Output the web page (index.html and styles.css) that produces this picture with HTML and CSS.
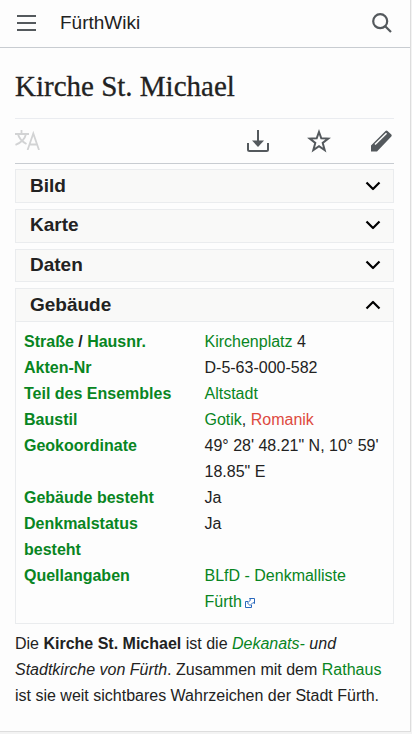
FILE: index.html
```
<!DOCTYPE html>
<html lang="de">
<head>
<meta charset="utf-8">
<title>Kirche St. Michael – FürthWiki</title>
<link rel="stylesheet" href="styles.css">
</head>
<body>
<div class="page">
  <header class="header">
    <svg class="menu" width="20" height="16" viewBox="0 0 20 16"><path d="M0 1h19M0 8h19M0 15h19" fill="none" stroke="#54595d" stroke-width="2"/></svg>
    <span class="brand">FürthWiki</span>
    <svg class="search" width="20" height="20" viewBox="0 0 20 20"><g fill="none" stroke="#54595d" stroke-width="2.2"><circle cx="8.2" cy="8.2" r="7"/><path d="M13 13l6 6"/></g></svg>
  </header>
  <main class="content">
    <h1>Kirche St. Michael</h1>
    <nav class="actions">
      <svg class="lang" width="25" height="20" viewBox="0 0 25 20"><g fill="none" stroke="#d2d3d4" stroke-width="1.8"><path d="M0 4h14M6.500 0v4M3 4c1 5 5 8 8.500 10M11 4C10 9 5 13 .5 14.800"/><path d="M12.600 20L18.300 3.500 24 20M14.500 14.500h7.700"/></g></svg>
      <svg class="download" width="22" height="22" viewBox="0 0 22 22"><path d="M1 13v6.500q0 1.500 1.500 1.500h17q1.500 0 1.500-1.500V13M11 0v12" fill="none" stroke="#54595d" stroke-width="2"/><path d="M5 10.500h12L11 17z" fill="#54595d"/></svg>
      <svg class="star" width="24" height="24" viewBox="0 0 24 24"><path d="M12 3l2.300 6.300 6.900.3-5.500 4.300 2 7.200-5.700-4-5.700 4 2-7.200-5.500-4.300 6.900-.3z" fill="none" stroke="#54595d" stroke-width="2"/></svg>
      <svg class="pencil" width="22" height="22" viewBox="0 0 22 22"><path d="M1 21.500v-6L15.500 1q1-1 2 0L21.300 4.500q.8 1 0 2L7 21.500z" fill="#54595d"/><path d="M5 14.500L16.500 3.300" fill="none" stroke="#fdfdfd" stroke-width="1.600"/></svg>
    </nav>
    <section class="panel"><h2>Bild</h2><svg class="chevron" width="16" height="10" viewBox="0 0 16 10"><path d="M1.500 1.500L8 8l6.500-6.500"/></svg></section>
    <section class="panel raised"><h2>Karte</h2><svg class="chevron" width="16" height="10" viewBox="0 0 16 10"><path d="M1.500 1.500L8 8l6.500-6.500"/></svg></section>
    <section class="panel short raised"><h2>Daten</h2><svg class="chevron" width="16" height="10" viewBox="0 0 16 10"><path d="M1.500 1.500L8 8l6.500-6.500"/></svg></section>
    <section class="panel open"><h2>Gebäude</h2><svg class="chevron" width="16" height="10" viewBox="0 0 16 10"><path d="M1.500 8.500L8 2l6.500 6.500"/></svg></section>
    <dl class="facts">
      <dt><a>Straße</a> / <a>Hausnr.</a></dt><dd><a>Kirchenplatz</a> 4</dd>
      <dt><a>Akten-Nr</a></dt><dd>D-5-63-000-582</dd>
      <dt><a>Teil des Ensembles</a></dt><dd><a>Altstadt</a></dd>
      <dt><a>Baustil</a></dt><dd><a>Gotik</a>, <a class="new">Romanik</a></dd>
      <dt><a>Geokoordinate</a></dt><dd>49° 28' 48.21" N, 10° 59'<br>18.85" E</dd>
      <dt><a>Gebäude besteht</a></dt><dd>Ja</dd>
      <dt><a>Denkmalstatus<br>besteht</a></dt><dd>Ja</dd>
      <dt><a>Quellangaben</a></dt><dd><a>BLfD - Denkmalliste<br>Fürth</a><svg class="external" width="10" height="10" viewBox="0 0 10 10"><path d="M3 3.500H.5v6h6V7" fill="none" stroke="#2868bd"/><path d="M4.500.5h5v5L8 4.500 5 7.500 2.500 5 5.500 2z" fill="#fff" stroke="#2868bd"/></svg></dd>
    </dl>
    <p>Die <b>Kirche St. Michael</b> ist die <i><a>Dekanats-</a> und<br>Stadtkirche von Fürth</i>. Zusammen mit dem <a>Rathaus</a><br>ist sie weit sichtbares Wahrzeichen der Stadt Fürth.</p>
  </main>
</div>
</body>
</html>
```
FILE: styles.css
```
* { box-sizing: border-box; }
body {
  margin: 0;
  height: 734px;
  overflow: hidden;
  background: #f3f3f3;
  color: #222;
  font: 16px/26px "Liberation Sans", Arial, sans-serif;
}
svg { display: block; flex: none; }
.page {
  width: 411px;
  height: 732px;
  background: #fdfdfd;
  border-right: 1px solid #ddd;
  border-bottom: 1px solid #ddd;
}
.header {
  display: flex;
  align-items: center;
  height: 48px;
  padding: 0 18px 2px 17px;
  border-bottom: 1px solid #c8ccd1;
}
.brand { margin-left: 23px; font-size: 19px; }
.search { margin-left: auto; }
.content { padding: 0 16px 0 15px; }
h1 {
  margin: 0;
  height: 70px;
  padding-top: 19px;
  font: 29px/38px Georgia, "Liberation Serif", serif;
  -webkit-text-stroke: 0.3px #222;
  white-space: nowrap;
}
.actions {
  display: flex;
  align-items: center;
  height: 46px;
  margin-bottom: 5px;
  border-top: 1px solid #eaecf0;
  border-bottom: 1px solid #c8ccd1;
}
.lang { margin-right: auto; margin-top: -2px; }
.star { margin: 0 39px 0 38px; }
.pencil { margin-right: 2px; }
.panel {
  display: flex;
  align-items: center;
  justify-content: space-between;
  height: 34px;
  margin-bottom: 6px;
  padding: 0 12px 0 14px;
  border: 1px solid #eaecee;
  background: #f9f9f8;
}
.panel.short { height: 33px; }
.panel.raised { padding-bottom: 2px; }
.panel.open { margin-bottom: 0; }
h2 { margin: 0; font-size: 19px; line-height: 30px; }
.chevron { fill: none; stroke: #000; stroke-width: 2.2; stroke-linejoin: round; }
.facts {
  display: grid;
  grid-template-columns: 180.5px 1fr;
  margin: 0;
  height: 302px;
  align-content: start;
  padding: 7px 8px 0;
  border: 1px solid #eaecee;
  border-top: 0;
  white-space: nowrap;
}
dt { font-weight: bold; }
dd { margin: 0; }
a { color: #088522; }
a.new { color: #dd4a40; }
.external { display: inline-block; margin-left: 3px; vertical-align: -1px; }
p { margin: 7px 0 0; white-space: nowrap; }
```
